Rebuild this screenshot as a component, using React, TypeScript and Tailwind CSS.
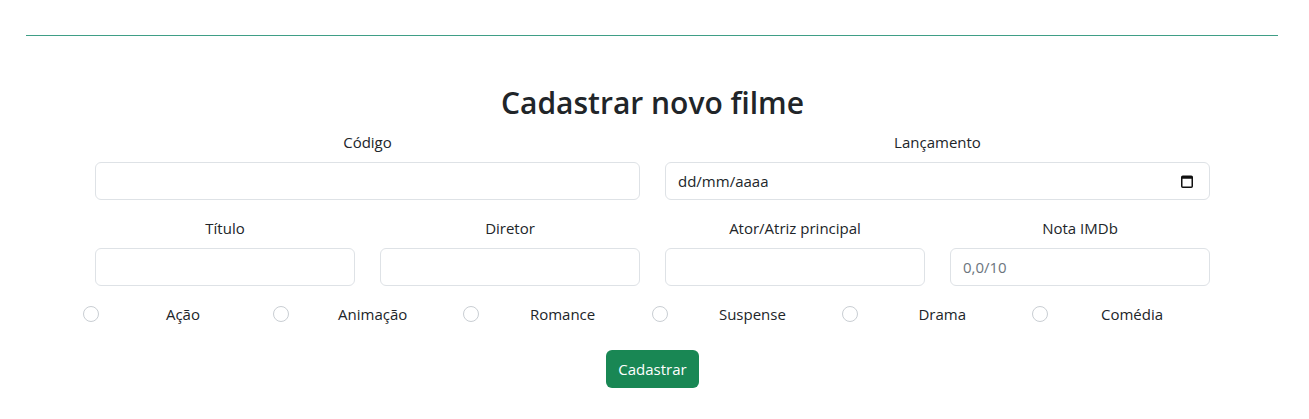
import React from "react";

const font = { fontFamily: '"Open Sans", "Noto Sans", sans-serif' };

const generos = ["Ação", "Animação", "Romance", "Suspense", "Drama", "Comédia"];

const Field = ({ label, children }: { label: string; children: React.ReactNode }) => (
  <div className="flex flex-col">
    <label className="mb-2 text-center text-[15px] leading-6 text-[#212529]">{label}</label>
    {children}
  </div>
);

const inputCls =
  "h-[38px] w-full rounded-[6px] border border-[#dee2e6] bg-white px-3 text-[15px] text-[#212529] outline-none placeholder:text-[#6c757d]";

const CalendarIcon = () => (
  <svg width="12" height="13" viewBox="0 0 12 13" fill="none">
    <rect x="0.75" y="1.25" width="10.5" height="11" rx="1" stroke="#111" strokeWidth="1.5" />
    <rect x="0.75" y="1.25" width="10.5" height="2.5" fill="#111" />
  </svg>
);

export default function App() {
  return (
    <div className="min-h-[419px] bg-white text-[#212529]" style={font}>
      <div className="pl-[26px] pr-[31px] pt-[35px]">
        <div className="h-px bg-[#3f9e86]" />
      </div>

      <form className="ml-[95px] mt-[48px] w-[1115px]">
        <h1 className="mb-2 text-center text-[30px] font-semibold leading-[38px]">Cadastrar novo filme</h1>

        <div className="grid grid-cols-2 gap-x-[25px]">
          <Field label="Código">
            <input className={inputCls} />
          </Field>
          <Field label="Lançamento">
            <div className={inputCls + " flex items-center justify-between pr-[16px]"}>
              <span>dd/mm/aaaa</span>
              <CalendarIcon />
            </div>
          </Field>
        </div>

        <div className="mt-4 grid grid-cols-4 gap-x-[25px]">
          <Field label="Título">
            <input className={inputCls} />
          </Field>
          <Field label="Diretor">
            <input className={inputCls} />
          </Field>
          <Field label="Ator/Atriz principal">
            <input className={inputCls} />
          </Field>
          <Field label="Nota IMDb">
            <input className={inputCls} placeholder="0,0/10" />
          </Field>
        </div>

        <div className="mx-[-12px] mt-[16px] flex">
          {generos.map((g) => (
            <label key={g} className="flex w-[190px] items-center">
              <span className="h-4 w-4 shrink-0 rounded-full border border-[#c9ced3] bg-white" />
              <span className="flex-1 pr-[6px] text-center text-[15px] leading-6">{g}</span>
            </label>
          ))}
        </div>

        <div className="mt-[24px] flex justify-center">
          <button
            type="button"
            className="h-[38px] rounded-[6px] bg-[#198754] px-3 text-[15px] text-white"
          >
            Cadastrar
          </button>
        </div>
      </form>
    </div>
  );
}
